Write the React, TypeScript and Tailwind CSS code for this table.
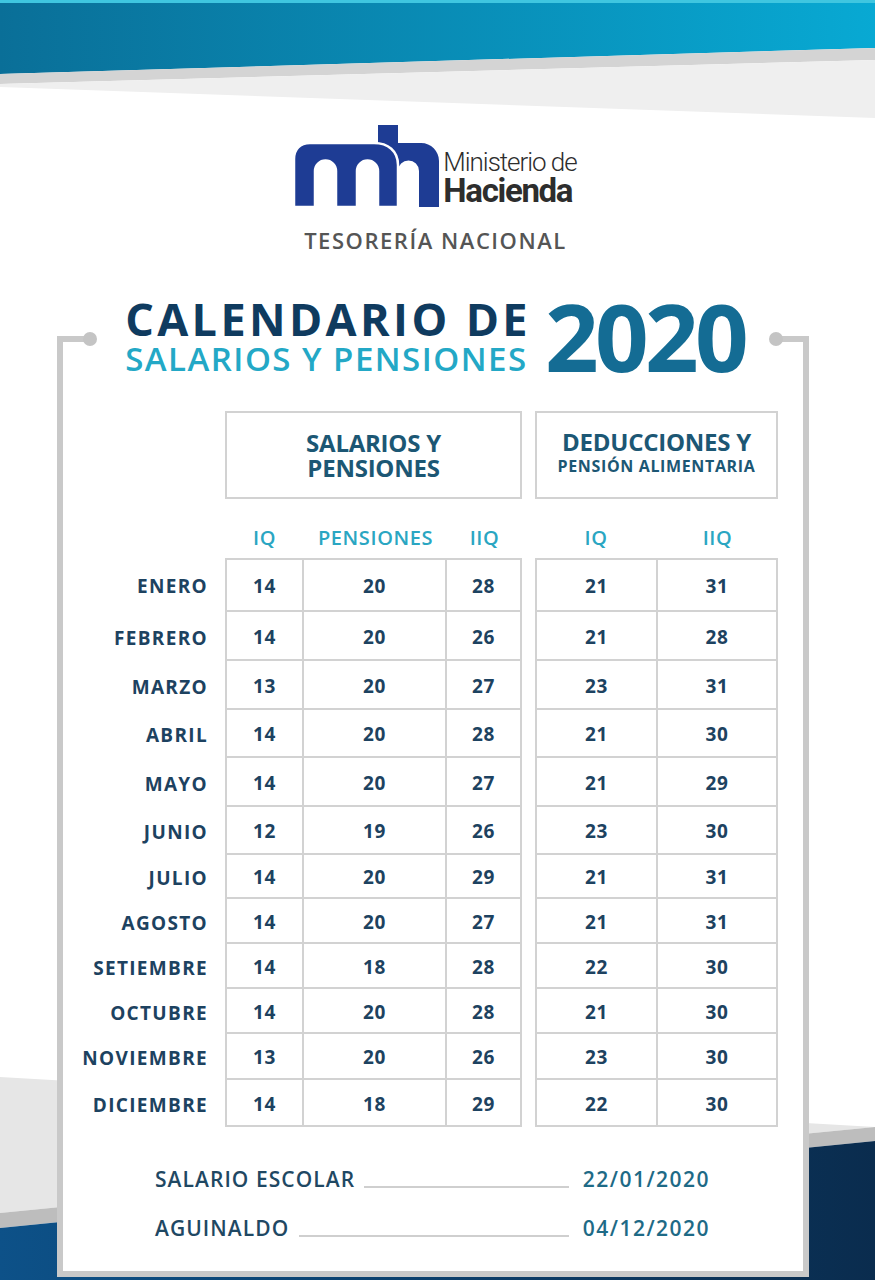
const rows = [
  { m: "ENERO", v: ["14", "20", "28", "21", "31"], h: "h-[54px]" },
  { m: "FEBRERO", v: ["14", "20", "26", "21", "28"], h: "h-[49px]" },
  { m: "MARZO", v: ["13", "20", "27", "23", "31"], h: "h-[49px]" },
  { m: "ABRIL", v: ["14", "20", "28", "21", "30"], h: "h-[48px]" },
  { m: "MAYO", v: ["14", "20", "27", "21", "29"], h: "h-[49px]" },
  { m: "JUNIO", v: ["12", "19", "26", "23", "30"], h: "h-[48px]" },
  { m: "JULIO", v: ["14", "20", "29", "21", "31"], h: "h-[44px]" },
  { m: "AGOSTO", v: ["14", "20", "27", "21", "31"], h: "h-[45px]" },
  { m: "SETIEMBRE", v: ["14", "18", "28", "22", "30"], h: "h-[45px]" },
  { m: "OCTUBRE", v: ["14", "20", "28", "21", "30"], h: "h-[45px]" },
  { m: "NOVIEMBRE", v: ["13", "20", "26", "23", "30"], h: "h-[46px]" },
  { m: "DICIEMBRE", v: ["14", "18", "29", "22", "30"], h: "h-[47px]" },
];

const font = "font-['Open_Sans',sans-serif]";

const Background = () => (
  <svg className="absolute inset-0" width="875" height="1280" viewBox="0 0 875 1280">
    <defs>
      <linearGradient id="top" x1="0" x2="1" y1="0" y2="0">
        <stop offset="0" stopColor="#0a6f98" />
        <stop offset="1" stopColor="#08a9d3" />
      </linearGradient>
      <linearGradient id="bottom" x1="0" x2="1" y1="0" y2="0">
        <stop offset="0" stopColor="#0d5188" />
        <stop offset="1" stopColor="#0a2c4e" />
      </linearGradient>
    </defs>
    <polygon points="0,0 875,0 875,48 0,74" fill="url(#top)" />
    <polygon points="0,0 875,0 875,3 0,3" fill="#3fc6e0" />
    <polygon points="0,74 875,48 875,60 0,84" fill="#d4d4d4" />
    <polygon points="0,84 875,60 875,118 0,87" fill="#efefef" />
    <polygon points="0,1077 875,1127 0,1213" fill="#e6e6e6" />
    <polygon points="0,1213 875,1127 875,1141 0,1228" fill="#bdbdbd" />
    <polygon points="0,1228 875,1141 875,1280 0,1280" fill="url(#bottom)" />
  </svg>
);

const Logo = () => (
  <svg width="146" height="82" viewBox="0 0 146 82">
    <rect x="84" y="0" width="20" height="82" fill="#1e3c94" />
    <path
      d="M84 82 V36 C84 26 92 18 102 18 H127 C137 18 145 26 145 36 V82 H125 V46 A10.5 10.5 0 0 0 104 46 V82 Z"
      fill="#1e3c94"
    />
    <path
      d="M0 82 V34 C0 24 6 18 16 18 H80 C94 18 104 26 104 40 V82 H84 V46 A10.5 10.5 0 0 0 63 46 V82 H42 V46 A10.5 10.5 0 0 0 21 46 V82 Z"
      fill="#1e3c94"
      stroke="#ffffff"
      strokeWidth="2.5"
    />
  </svg>
);

const Cell = ({ w, last, children }: { w: string; last?: boolean; children: string }) => (
  <div className={`${w} flex items-center justify-center pt-[3px] ${last ? "" : "border-r-2"} border-[#d2d2d2] text-[19px] font-bold tracking-[0.03em] text-[#1d4260]`}>
    {children}
  </div>
);

export default function App() {
  return (
    <div className={`relative w-[875px] h-[1280px] overflow-hidden bg-white ${font}`}>
      <Background />
      <div className="relative pt-[125px]">
        {/* logo */}
        <div className="flex justify-center pr-[4px]">
          <div className="flex items-end gap-[3px]">
            <Logo />
            <div className="flex flex-col text-[#2d2d2d] pb-[1px]">
              <span className="text-[26px] leading-[26px] font-light tracking-[-0.04em] font-['Roboto',sans-serif]">Ministerio de</span>
              <span className="text-[33px] leading-[31px] font-bold tracking-[-0.04em] font-['Roboto',sans-serif]">Hacienda</span>
            </div>
          </div>
        </div>
        <div className="mt-[22px] text-center pr-[4px] text-[22px] font-semibold tracking-[0.07em] text-[#555555] leading-none">
          TESORERÍA NACIONAL
        </div>

        {/* card */}
        <div className="relative flow-root ml-[57px] mt-[85px] w-[752px] h-[941px] border-x-[6px] border-b-[6px] border-[#c9c9c9] bg-white">
          <div className="absolute -left-[6px] top-0 h-[6px] w-[33px] bg-[#c9c9c9]" />
          <div className="absolute left-[20px] -top-[4px] h-[14px] w-[14px] rounded-full bg-[#c4c4c4]" />
          <div className="absolute -right-[6px] top-0 h-[6px] w-[33px] bg-[#c9c9c9]" />
          <div className="absolute right-[20px] -top-[4px] h-[14px] w-[14px] rounded-full bg-[#c4c4c4]" />

          <div className="relative -mt-[40px] h-[80px] flex items-center justify-center gap-[14px] pl-[4px]">
            <div className="flex flex-col">
              <span className="text-[45px] leading-[42px] font-bold tracking-[0.075em] text-[#0f3b5f]">CALENDARIO DE</span>
              <span className="mt-[2px] text-[33px] leading-[33px] font-semibold tracking-[0.045em] text-[#23a8c6]">SALARIOS Y PENSIONES</span>
            </div>
            <span className="text-[94px] font-bold leading-none tracking-[-0.04em] text-[#146c94]">2020</span>
          </div>

          {/* header boxes */}
          <div className="mt-[35px] flex">
            <div className="w-[162px]" />
            <div className="w-[297px] h-[88px] border-2 border-[#d2d2d2] flex flex-col items-center justify-center leading-[25px] text-[24px] font-bold tracking-[-0.01em] text-[#1c5774]">
              <span>SALARIOS Y</span>
              <span>PENSIONES</span>
            </div>
            <div className="w-[13px]" />
            <div className="w-[243px] h-[88px] border-2 border-[#d2d2d2] flex flex-col items-center justify-center pb-[6px] leading-none text-[#1c5774] font-bold">
              <span className="text-[24px] tracking-[-0.01em]">DEDUCCIONES Y</span>
              <span className="mt-[4px] text-[16px] tracking-[0.04em]">PENSIÓN ALIMENTARIA</span>
            </div>
          </div>

          {/* sub headers */}
          <div className="flex h-[59px] items-end pb-[10px] text-[20px] font-semibold tracking-[0.03em] text-[#2aa6c2] leading-none">
            <div className="w-[162px]" />
            <div className="w-[79px] text-center">IQ</div>
            <div className="w-[143px] text-center">PENSIONES</div>
            <div className="w-[75px] text-center">IIQ</div>
            <div className="w-[13px]" />
            <div className="w-[122px] text-center">IQ</div>
            <div className="w-[121px] text-center">IIQ</div>
          </div>

          {/* rows */}
          {rows.map((r, i) => (
            <div key={r.m} className={`flex ${r.h}`}>
              <div className="w-[162px] pr-[17px] pt-[3px] flex items-center justify-end text-[19px] font-bold tracking-[0.07em] text-[#1d4260]">
                {r.m}
              </div>
              <div className={`w-[297px] flex border-x-2 border-b-2 ${i === 0 ? "border-t-2" : ""} border-[#d2d2d2]`}>
                <Cell w="w-[77px]">{r.v[0]}</Cell>
                <Cell w="w-[143px]">{r.v[1]}</Cell>
                <Cell w="w-[73px]" last>{r.v[2]}</Cell>
              </div>
              <div className="w-[13px]" />
              <div className={`w-[243px] flex border-x-2 border-b-2 ${i === 0 ? "border-t-2" : ""} border-[#d2d2d2]`}>
                <Cell w="w-[121px]">{r.v[3]}</Cell>
                <Cell w="w-[118px]" last>{r.v[4]}</Cell>
              </div>
            </div>
          ))}

          {/* bottom dates */}
          <div className="mt-[42px] ml-[92px] w-[555px] flex flex-col gap-[28px] text-[21px] font-semibold leading-none">
            <div className="flex items-end">
              <span className="tracking-[0.05em] text-[#1f4863]">SALARIO ESCOLAR</span>
              <div className="flex-1 ml-[9px] mr-[14px] mb-[2px] h-[2px] bg-[#cfcfcf]" />
              <span className="tracking-[0.07em] text-[#1e6a86]">22/01/2020</span>
            </div>
            <div className="flex items-end">
              <span className="tracking-[0.05em] text-[#1f4863]">AGUINALDO</span>
              <div className="flex-1 ml-[10px] mr-[14px] mb-[2px] h-[2px] bg-[#cfcfcf]" />
              <span className="tracking-[0.07em] text-[#1e6a86]">04/12/2020</span>
            </div>
          </div>
        </div>
      </div>
    </div>
  );
}
